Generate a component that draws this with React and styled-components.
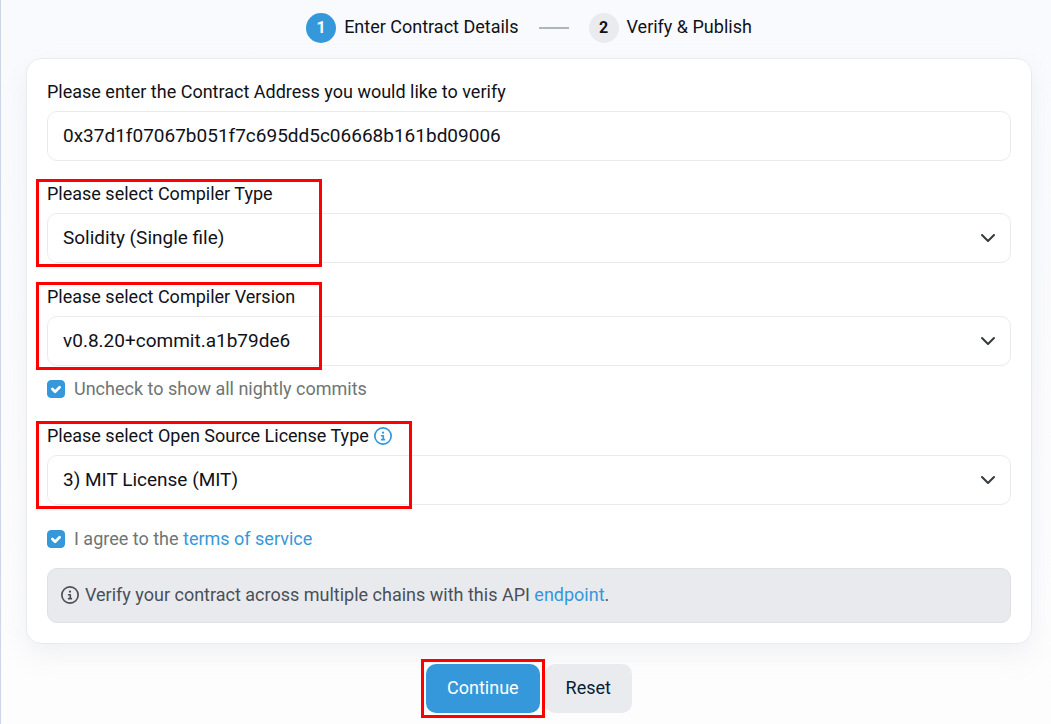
import React, { useState } from 'react';
import styled, { createGlobalStyle, css, ThemeProvider } from 'styled-components';

const theme = {
  color: {
    primary: '#3498db',
    text: '#111118',
    muted: '#6e7574',
    notice: '#495057',
    reset: '#081d35',
    highlight: '#ff0000'
  },
  background: {
    secondary: '#e9ebee'
  },
  border: {
    color: '#e9ecef',
    radius: '10px'
  }
};

const GlobalStyle = createGlobalStyle`
  *, *::before, *::after {
    box-sizing: border-box;
  }

  body {
    margin: 0;
    color: #111118;
    background: #fdfdfe;
    font-family: Roboto, sans-serif;
    font-size: 18px;
    line-height: 24px;
  }

  button, input, select {
    font: inherit;
    color: inherit;
  }
`;

const Page = styled.main`
  min-height: 100vh;
  padding: 13px 19px 10px 25px;
  border-left: 1px solid #cbd6e6;
  background: linear-gradient(#f9fafd, #fdfdfd);
`;

const Steps = styled.ol`
  display: flex;
  justify-content: center;
  align-items: center;
  gap: 20px;
  margin: 0 0 15px;
  padding: 0;
  list-style: none;
`;

const Step = styled.li`
  display: flex;
  align-items: flex-start;
  gap: 8px;
  line-height: 28px;
`;

const StepNumber = styled.span`
  width: 30px;
  border-radius: 50%;
  font-size: 16px;
  font-weight: 700;
  line-height: 30px;
  text-align: center;
  ${({ theme, $active }) => css`
    color: ${$active ? 'white' : theme.color.text};
    background-color: ${$active ? theme.color.primary : theme.background.secondary};
  `}
`;

const StepLine = styled.li`
  width: 30px;
  height: 2px;
  background-color: #adb5bd;
`;

const Card = styled.section`
  display: flex;
  flex-direction: column;
  margin-bottom: 20px;
  padding: 20px;
  border: 1px solid ${({ theme }) => theme.border.color};
  border-radius: 15px;
  background-color: white;
  box-shadow: 0 10px 24px rgba(189, 197, 209, 0.2);
`;

const Field = styled.div`
  position: relative;
  display: flex;
  flex-direction: column;
  gap: 6px;
  margin-bottom: ${({ $gap = 20 }) => $gap}px;
`;

const Label = styled.label`
  display: flex;
  align-items: center;
  gap: 5px;
  line-height: 26px;
`;

const controlStyle = css`
  width: 100%;
  height: 50px;
  margin: 0;
  padding: 0 15px 1px;
  appearance: none;
  outline: none;
  font-size: 19px;
  background-color: white;
  ${({ theme }) => css`
    border: 1px solid ${theme.border.color};
    border-radius: ${theme.border.radius};
  `}
`;

const TextInput = styled.input`
  ${controlStyle}
`;

const StyledSelect = styled.select`
  ${controlStyle}
  background-image: url("data:image/svg+xml,%3Csvg xmlns='http://www.w3.org/2000/svg' viewBox='0 0 16 16'%3E%3Cpath fill='none' stroke='%23343a40' stroke-linecap='round' stroke-linejoin='round' stroke-width='2' d='m2 5 6 6 6-6'/%3E%3C/svg%3E");
  background-repeat: no-repeat;
  background-position: right 14px center;
  background-size: 16px 16px;
`;

const Highlight = styled.span`
  position: absolute;
  border: 3px solid ${({ theme }) => theme.color.highlight};
  pointer-events: none;
`;

const FieldHighlight = styled(Highlight)`
  top: -2px;
  bottom: -4px;
  left: -11px;
  width: ${({ $width }) => $width}px;
`;

const ButtonHighlight = styled(Highlight)`
  inset: -5px;
`;

const CheckRow = styled.div`
  display: flex;
  align-items: center;
  gap: 9px;
  margin-bottom: ${({ $gap }) => $gap}px;
  color: ${({ theme }) => theme.color.muted};
`;

const Checkbox = styled.input`
  width: 18px;
  height: 18px;
  margin: 0;
  appearance: none;
  border-radius: 4px;
  border: 1px solid ${({ theme }) => theme.color.primary};
  &:checked {
    background: ${({ theme }) => theme.color.primary}
      url("data:image/svg+xml,%3Csvg xmlns='http://www.w3.org/2000/svg' viewBox='0 0 20 20'%3E%3Cpath fill='none' stroke='%23fff' stroke-linecap='round' stroke-linejoin='round' stroke-width='3' d='m6 10 3 3 5-5'/%3E%3C/svg%3E")
      center / 18px no-repeat;
  }
`;

const Link = styled.a`
  color: ${({ theme }) => theme.color.primary};
  text-decoration: none;
`;

const Notice = styled.div`
  display: flex;
  align-items: center;
  gap: 6px;
  height: 55px;
  padding: 0 13px 2px;
  border: 1px solid #dee0e4;
  border-radius: ${({ theme }) => theme.border.radius};
  color: ${({ theme }) => theme.color.notice};
  background-color: #e9eaee;
`;

const StyledInfoIcon = styled.svg`
  flex: none;
  width: 18px;
  height: 18px;
  color: ${({ theme, $primary }) => ($primary ? theme.color.primary : 'inherit')};
`;

const Actions = styled.div`
  display: flex;
  justify-content: center;
  gap: 5px;
`;

const ButtonWrapper = styled.div`
  position: relative;
`;

const Button = styled.button`
  height: 49px;
  padding: 0 21px 2px;
  border: 0;
  cursor: pointer;
  ${({ theme, $primary }) => css`
    border-radius: ${theme.border.radius};
    color: ${$primary ? 'white' : theme.color.reset};
    background-color: ${$primary ? theme.color.primary : theme.background.secondary};
  `}
`;

const InfoIcon = ({ primary }) => (
  <StyledInfoIcon $primary={primary} viewBox="0 0 512 512" aria-hidden="true">
    <circle cx="256" cy="256" r="232" fill="none" stroke="currentColor" strokeWidth="48" />
    <path
      fill="currentColor"
      d="M216 336h24v-64h-24a24 24 0 0 1 0-48h48a24 24 0 0 1 24 24v88h8a24 24 0 0 1 0 48h-80a24 24 0 0 1 0-48zM256 128a32 32 0 1 1 0 64 32 32 0 1 1 0-64z"
    />
  </StyledInfoIcon>
);

const SelectField = ({ id, label, option, gap, highlight, info }) => (
  <Field $gap={gap}>
    <Label htmlFor={id}>
      {label}
      {info && <InfoIcon primary />}
    </Label>
    <StyledSelect id={id}>
      <option>{option}</option>
    </StyledSelect>
    <FieldHighlight $width={highlight} />
  </Field>
);

const App = () => {
  const [address, setAddress] = useState('0x37d1f07067b051f7c695dd5c06668b161bd09006');
  return (
    <ThemeProvider theme={theme}>
      <GlobalStyle />
      <Page>
        <Steps>
          <Step>
            <StepNumber $active>1</StepNumber>
            Enter Contract Details
          </Step>
          <StepLine aria-hidden="true" />
          <Step>
            <StepNumber>2</StepNumber>
            Verify &amp; Publish
          </Step>
        </Steps>
        <Card>
          <Field>
            <Label htmlFor="address">Please enter the Contract Address you would like to verify</Label>
            <TextInput id="address" value={address} onChange={e => setAddress(e.target.value)} />
          </Field>
          <SelectField
            id="compiler-type"
            label="Please select Compiler Type"
            option="Solidity (Single file)"
            gap={21}
            highlight={286}
          />
          <SelectField
            id="compiler-version"
            label="Please select Compiler Version"
            option="v0.8.20+commit.a1b79de6"
            gap={11}
            highlight={286}
          />
          <CheckRow $gap={22}>
            <Checkbox id="nightly" type="checkbox" defaultChecked />
            <label htmlFor="nightly">Uncheck to show all nightly commits</label>
          </CheckRow>
          <SelectField
            id="license"
            label="Please select Open Source License Type"
            option="3) MIT License (MIT)"
            gap={22}
            highlight={376}
            info
          />
          <CheckRow $gap={17}>
            <Checkbox id="terms" type="checkbox" defaultChecked />
            <label htmlFor="terms">
              I agree to the <Link href="#terms">terms of service</Link>
            </label>
          </CheckRow>
          <Notice>
            <InfoIcon />
            <span>
              Verify your contract across multiple chains with this API <Link href="#endpoint">endpoint</Link>.
            </span>
          </Notice>
        </Card>
        <Actions>
          <ButtonWrapper>
            <Button type="button" $primary>
              Continue
            </Button>
            <ButtonHighlight />
          </ButtonWrapper>
          <Button type="reset">Reset</Button>
        </Actions>
      </Page>
    </ThemeProvider>
  );
};

export default App;
